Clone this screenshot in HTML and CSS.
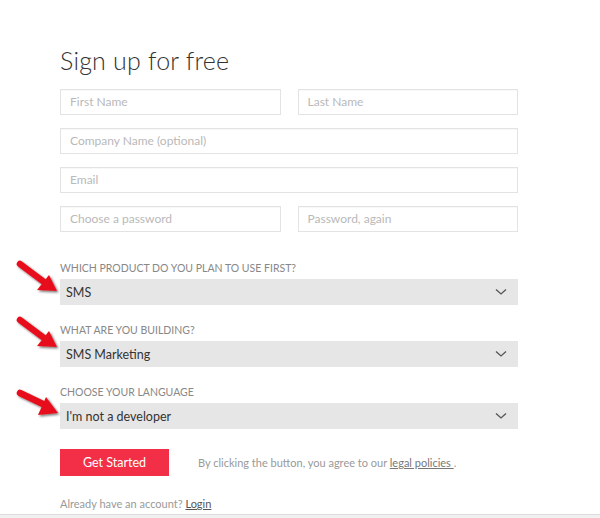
FILE: index.html
```html
<!DOCTYPE html>
<html>
<head>
<meta charset="utf-8">
<link rel="stylesheet" href="styles.css">
</head>
<body>
<div class="page">
  <form class="form">
    <h1 class="title">Sign up for free</h1>
    <div class="row two">
      <div class="field">First Name</div>
      <div class="field">Last Name</div>
    </div>
    <div class="row"><div class="field">Company Name (optional)</div></div>
    <div class="row"><div class="field">Email</div></div>
    <div class="row two">
      <div class="field">Choose a password</div>
      <div class="field">Password, again</div>
    </div>

    <div class="group g1">
      <div class="label">Which product do you plan to use first?</div>
      <div class="select"><span>SMS</span><svg class="chev" width="12" height="8" viewBox="0 0 12 8"><path d="M1 1.5 L6 6 L11 1.5" fill="none" stroke="#555" stroke-width="1.3"/></svg></div>
    </div>
    <div class="group g2">
      <div class="label">What are you building?</div>
      <div class="select"><span>SMS Marketing</span><svg class="chev" width="12" height="8" viewBox="0 0 12 8"><path d="M1 1.5 L6 6 L11 1.5" fill="none" stroke="#555" stroke-width="1.3"/></svg></div>
    </div>
    <div class="group g3">
      <div class="label">Choose your language</div>
      <div class="select"><span>I'm not a developer</span><svg class="chev" width="12" height="8" viewBox="0 0 12 8"><path d="M1 1.5 L6 6 L11 1.5" fill="none" stroke="#555" stroke-width="1.3"/></svg></div>
    </div>

    <div class="actions">
      <button type="button" class="btn">Get Started</button>
      <span class="terms">By clicking the button, you agree to our <a class="link">legal policies </a>.</span>
    </div>
    <div class="login">Already have an account? <a class="link dark">Login</a></div>
  </form>

  <svg class="arrow a1" width="50" height="40" viewBox="0 0 50 40">
    <defs><filter id="sh" x="-20%" y="-20%" width="150%" height="150%"><feDropShadow dx="1.5" dy="1.5" stdDeviation="1" flood-color="#000" flood-opacity="0.55"/></filter></defs>
    <g filter="url(#sh)"><line x1="4" y1="4" x2="28" y2="22" stroke="#e8101a" stroke-width="6.5" stroke-linecap="round"/><polygon points="41,31 21,30 33,15" fill="#e8101a"/></g>
  </svg>
  <svg class="arrow a2" width="50" height="40" viewBox="0 0 50 40">
    <g filter="url(#sh)"><line x1="4" y1="4" x2="28" y2="22" stroke="#e8101a" stroke-width="6.5" stroke-linecap="round"/><polygon points="41,31 21,30 33,15" fill="#e8101a"/></g>
  </svg>
  <svg class="arrow a3" width="50" height="34" viewBox="0 0 50 34">
    <g filter="url(#sh)"><line x1="4" y1="4" x2="29" y2="16" stroke="#e8101a" stroke-width="6.5" stroke-linecap="round"/><polygon points="42,24 22,26 30,8" fill="#e8101a"/></g>
  </svg>
</div>
<div class="footer"></div>
</body>
</html>
```
FILE: styles.css
```css
html, body {
  margin: 0;
  padding: 0;
  background: #fff;
}
body {
  font-family: "Open Sans", "Liberation Sans", sans-serif;
  color: #333;
}
.page {
  position: relative;
  padding: 0 82px 0 60px;
  height: 514px;
}
.form {
  display: flex;
  flex-direction: column;
  padding-top: 42px;
}
.title {
  font-family: Lato, "Open Sans", sans-serif;
  font-weight: 300;
  font-size: 25px;
  line-height: 36px;
  margin: 0 0 11px 0;
  color: #333;
  letter-spacing: 0.2px;
}
.row {
  display: flex;
  gap: 17px;
  margin-bottom: 13px;
}
.field {
  flex: 1;
  height: 24px;
  border: 1px solid #e3e3e3;
  box-shadow: inset 0 1px 1px rgba(0,0,0,0.03);
  font-size: 12px;
  line-height: 24px;
  padding-left: 9px;
  color: #b9b9b9;
  font-family: Lato, "Open Sans", sans-serif;
}
.group {
  display: flex;
  flex-direction: column;
}
.g1 { margin-top: 16px; }
.g2 { margin-top: 18px; }
.g3 { margin-top: 18px; }
.label {
  text-transform: uppercase;
  font-family: Lato, "Open Sans", sans-serif;
  font-size: 10.5px;
  letter-spacing: 0;
  color: #888;
  line-height: 14px;
  margin-bottom: 4px;
}
.select {
  height: 26px;
  background: #e6e6e6;
  display: flex;
  align-items: center;
  justify-content: space-between;
  padding: 0 11px 0 6px;
  font-family: Lato, "Open Sans", sans-serif;
  font-size: 12.5px;
  color: #333;
}
.chev { display: block; }
.actions {
  display: flex;
  align-items: center;
  gap: 29px;
  margin-top: 20px;
}
.btn {
  width: 109px;
  height: 27px;
  background: #f22f46;
  border: none;
  color: #fff;
  font-family: Lato, "Open Sans", sans-serif;
  font-size: 12.5px;
  padding: 0;
}
.terms, .login {
  font-family: Lato, "Open Sans", sans-serif;
  font-size: 11px;
  color: #999;
}
.link {
  text-decoration: underline;
  color: #777;
}
.link.dark { color: #555; }
.login {
  margin-top: 21px;
}
.arrow {
  position: absolute;
  left: 16px;
}
.a1 { top: 260px; }
.a2 { top: 316px; }
.a3 { top: 389px; }
.footer {
  border-top: 1px solid #dcdcdc;
  background: #f1f1f1;
  height: 10px;
}
```
